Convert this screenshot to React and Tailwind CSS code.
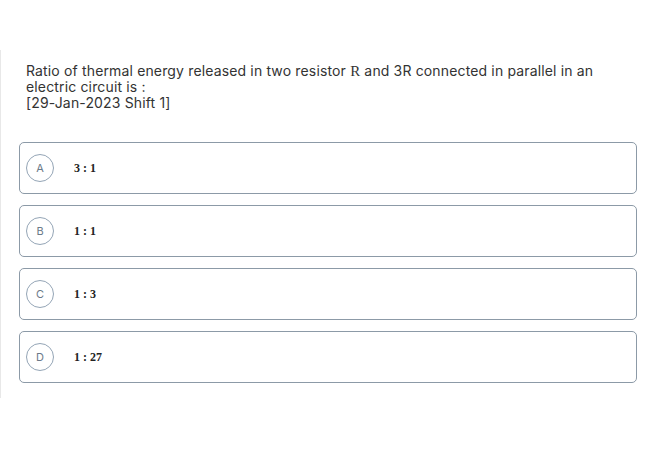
const OPTIONS = [
  { key: 'A', text: '3 : 1' },
  { key: 'B', text: '1 : 1' },
  { key: 'C', text: '1 : 3' },
  { key: 'D', text: '1 : 27' },
]

export default function App() {
  return (
    <div className="h-[450px] w-[650px] bg-white pt-[50px]">
      <div className="h-[348px] border-l border-[#e8e8e8] pl-[18px] pr-[13px] pt-[13px]">
        {/* Question */}
        <p className="pl-[7px] font-['Inter',sans-serif] text-[14px] leading-[16px] tracking-[0.15px] text-[#333]">
          Ratio of thermal energy released in two resistor{' '}
          <span className="font-['Liberation_Serif',serif] text-[15px]">R</span> and 3R connected in parallel in an
          <br />
          electric circuit is :
          <br />
          [29-Jan-2023 Shift 1]
        </p>

        {/* Options */}
        <div className="mt-[31px] flex flex-col gap-[11px]">
          {OPTIONS.map(o => (
            <div
              key={o.key}
              className="flex h-[52px] items-center rounded-[5px] border border-[#8c9aa7] pl-[6px]"
            >
              <span className="flex h-[28px] w-[28px] items-center justify-center rounded-full border-[1.5px] border-[#94a5b6] font-['Inter',sans-serif] text-[11px] text-[#6b7a89]">
                {o.key}
              </span>
              <span className="ml-[20px] font-['Liberation_Serif',serif] text-[12px] font-bold text-[#222]">
                {o.text}
              </span>
            </div>
          ))}
        </div>
      </div>
    </div>
  )
}
